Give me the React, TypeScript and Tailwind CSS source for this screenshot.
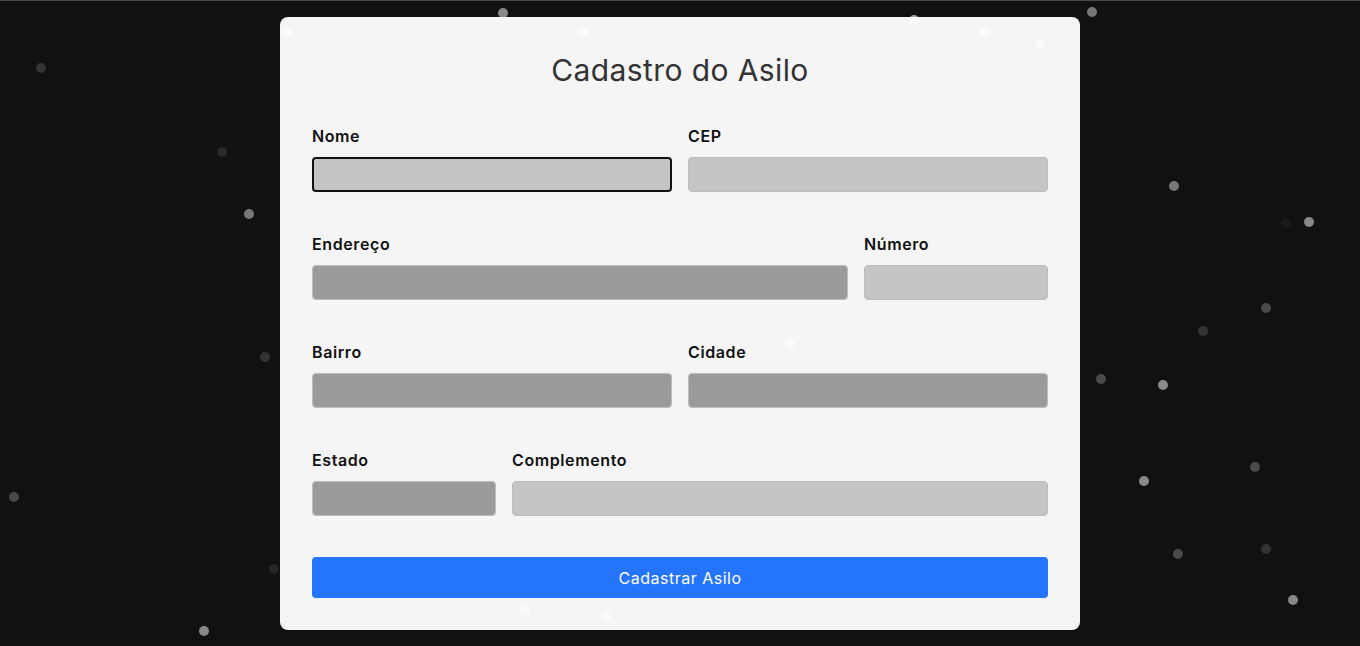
import React from "react";

const dots: { x: number; y: number; c: string }[] = [
  { x: 41, y: 67, c: "#333333" },
  { x: 222, y: 151, c: "#2a2a2a" },
  { x: 249, y: 213, c: "#777777" },
  { x: 265, y: 356, c: "#333333" },
  { x: 14, y: 496, c: "#474747" },
  { x: 274, y: 568, c: "#262626" },
  { x: 204, y: 630, c: "#888888" },
  { x: 503, y: 12, c: "#888888" },
  { x: 1092, y: 11, c: "#777777" },
  { x: 1174, y: 185, c: "#777777" },
  { x: 1286, y: 222, c: "#1a1a1a" },
  { x: 1309, y: 221, c: "#888888" },
  { x: 1266, y: 307, c: "#4a4a4a" },
  { x: 1203, y: 330, c: "#333333" },
  { x: 1101, y: 378, c: "#4a4a4a" },
  { x: 1163, y: 384, c: "#8a8a8a" },
  { x: 1255, y: 466, c: "#4a4a4a" },
  { x: 1144, y: 480, c: "#8a8a8a" },
  { x: 1178, y: 553, c: "#4a4a4a" },
  { x: 1266, y: 548, c: "#333333" },
  { x: 1293, y: 599, c: "#888888" },
];

const faint: { x: number; y: number }[] = [
  { x: 287, y: 33 },
  { x: 583, y: 32 },
  { x: 914, y: 20 },
  { x: 985, y: 32 },
  { x: 1040, y: 43 },
  { x: 790, y: 343 },
  { x: 606, y: 617 },
  { x: 525, y: 610 },
];

function Field({
  label,
  width,
  tone,
  focused,
}: {
  label: string;
  width: string;
  tone: "light" | "dark";
  focused?: boolean;
}) {
  return (
    <div className={`flex flex-col ${width}`}>
      <label className="text-[16px] leading-[22px] font-semibold tracking-[0.6px] text-[#111111] mb-[10px]">
        {label}
      </label>
      <input
        className={`h-[35px] w-full rounded-[4px] outline-none ${
          tone === "light" ? "bg-[#c4c4c4]" : "bg-[#9a9a9a]"
        } ${focused ? "border-2 border-[#111111]" : "border border-[#bdbdbd]"}`}
      />
    </div>
  );
}

export default function App() {
  return (
    <div
      className="relative h-screen w-full overflow-hidden bg-[#111111] border-t border-[#4a4a4a] flex items-center justify-center"
      style={{ fontFamily: "Inter, 'Noto Sans', sans-serif" }}
    >
      {dots.map((d, i) => (
        <span
          key={i}
          className="absolute h-[10px] w-[10px] rounded-full"
          style={{ left: d.x - 5, top: d.y - 5, background: d.c }}
        />
      ))}
      <div className="relative w-[800px] rounded-[8px] bg-[#f5f5f5] px-8 pt-8 pb-8">
        <h1 className="text-center text-[30px] leading-[42px] font-normal text-[#333333] mb-[34px] tracking-[0.4px]">
          Cadastro do Asilo
        </h1>
        <div className="flex gap-4 mb-[41px]">
          <Field label="Nome" width="flex-1" tone="light" focused />
          <Field label="CEP" width="flex-1" tone="light" />
        </div>
        <div className="flex gap-4 mb-[41px]">
          <Field label="Endereço" width="flex-1" tone="dark" />
          <Field label="Número" width="w-[184px]" tone="light" />
        </div>
        <div className="flex gap-4 mb-[41px]">
          <Field label="Bairro" width="flex-1" tone="dark" />
          <Field label="Cidade" width="flex-1" tone="dark" />
        </div>
        <div className="flex gap-4 mb-[41px]">
          <Field label="Estado" width="w-[184px]" tone="dark" />
          <Field label="Complemento" width="flex-1" tone="light" />
        </div>
        <button className="h-[41px] w-full rounded-[4px] bg-[#2575fc] text-white text-[16px] tracking-[0.5px]">
          Cadastrar Asilo
        </button>
        {faint.map((d, i) => (
          <span
            key={i}
            className="absolute h-[10px] w-[10px] rounded-full bg-white/60"
            style={{ left: d.x - 5 - 280, top: d.y - 5 - 17 }}
          />
        ))}
      </div>
    </div>
  );
}
